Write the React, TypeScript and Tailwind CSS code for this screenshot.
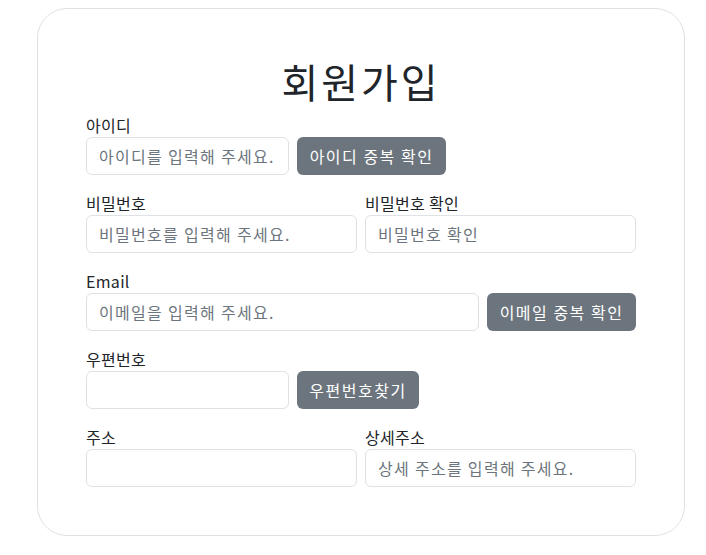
import React from 'react';

const font = { fontFamily: '"Noto Sans CJK KR", "Noto Sans", sans-serif' };

const inputCls =
  'block h-[38px] rounded-[6px] border border-[#dee2e6] bg-white px-3 text-base tracking-[1.3px] text-[#212529] placeholder:text-[#6c757d] outline-none';
const btnCls =
  'h-[38px] shrink-0 rounded-[6px] bg-[#6c757d] px-3 text-base tracking-[1.5px] text-white whitespace-nowrap';

const Label: React.FC<{ children: React.ReactNode }> = ({ children }) => (
  <label className="block h-6 text-base leading-6 tracking-[0.3px] text-[#212529]">{children}</label>
);

const App: React.FC = () => {
  return (
    <div className="min-h-[555px] bg-white pt-2" style={font}>
      <div className="ml-[37px] w-[648px] rounded-[30px] border border-[#dee2e6] p-12">
        <h1 className="mb-2 text-center text-[40px] leading-[48px] tracking-[3px] text-[#212529]">회원가입</h1>

        <div className="mb-4">
          <Label>아이디</Label>
          <div className="flex gap-2">
            <input className={`${inputCls} w-[203px]`} placeholder="아이디를 입력해 주세요." />
            <button className={`${btnCls} w-[149px]`}>아이디 중복 확인</button>
          </div>
        </div>

        <div className="mb-4 grid grid-cols-2 gap-2">
          <div>
            <Label>비밀번호</Label>
            <input type="password" className={`${inputCls} w-full`} placeholder="비밀번호를 입력해 주세요." />
          </div>
          <div>
            <Label>비밀번호 확인</Label>
            <input type="password" className={`${inputCls} w-full`} placeholder="비밀번호 확인" />
          </div>
        </div>

        <div className="mb-4">
          <Label>Email</Label>
          <div className="flex gap-2">
            <input className={`${inputCls} min-w-0 flex-1`} placeholder="이메일을 입력해 주세요." />
            <button className={`${btnCls} w-[149px]`}>이메일 중복 확인</button>
          </div>
        </div>

        <div className="mb-4">
          <Label>우편번호</Label>
          <div className="flex gap-2">
            <input className={`${inputCls} w-[203px]`} />
            <button className={`${btnCls} w-[122px]`}>우편번호찾기</button>
          </div>
        </div>

        <div className="grid grid-cols-2 gap-2">
          <div>
            <Label>주소</Label>
            <input className={`${inputCls} w-full`} />
          </div>
          <div>
            <Label>상세주소</Label>
            <input className={`${inputCls} w-full`} placeholder="상세 주소를 입력해 주세요." />
          </div>
        </div>
      </div>
    </div>
  );
};

export default App;
